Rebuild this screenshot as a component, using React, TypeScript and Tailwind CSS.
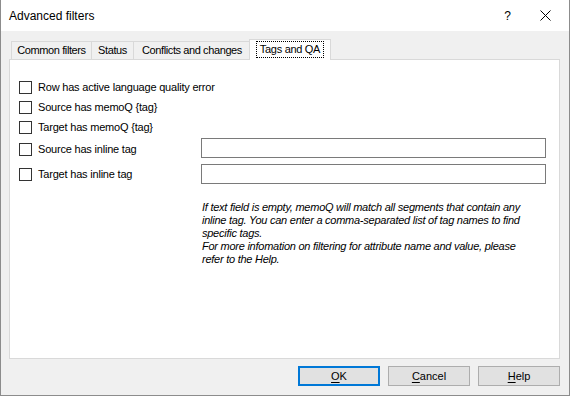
import React from "react";

const font = { fontFamily: '"Liberation Sans", Arial, sans-serif' };

function Checkbox() {
  return <div className="w-[13px] h-[13px] border border-[#333333] bg-white shrink-0" />;
}

function CheckRow({ label }: { label: string }) {
  return (
    <div className="flex items-center h-[13px]">
      <Checkbox />
      <span className="ml-[6px] text-[11px] leading-[13px] tracking-[-0.2px] text-black whitespace-nowrap">{label}</span>
    </div>
  );
}

function InputRow({ label, cbOffset }: { label: string; cbOffset: string }) {
  return (
    <div className="flex items-start h-[20px]">
      <div className={`flex items-center w-[182px] ${cbOffset}`}>
        <Checkbox />
        <span className="ml-[6px] text-[11px] leading-[13px] tracking-[-0.2px] text-black whitespace-nowrap">{label}</span>
      </div>
      <div className="w-[345px] h-[20px] border border-[#7a7a7a] bg-white" />
    </div>
  );
}

function Tab({ label, w, extra }: { label: string; w: string; extra?: string }) {
  return (
    <div
      className={`h-[18px] ${w} border-t border-l border-[#d9d9d9] bg-[#f0f0f0] flex items-center justify-center text-[11px] tracking-[-0.4px] text-black whitespace-nowrap ${extra ?? ""}`}
    >
      {label}
    </div>
  );
}

function Btn({ children, primary }: { children: React.ReactNode; primary?: boolean }) {
  return (
    <div
      className={`w-[82px] h-[20px] flex items-center justify-center bg-[#e1e1e1] text-[11px] text-black ${
        primary ? "border-2 border-[#0078d7]" : "border border-[#adadad]"
      }`}
    >
      {children}
    </div>
  );
}

export default function App() {
  return (
    <div style={font} className="w-[570px] h-[396px] border-x border-b border-[#8c8c8c] bg-[#f0f0f0] flex flex-col overflow-hidden">
      {/* Title bar */}
      <div className="h-[31px] bg-white flex items-center pl-[8px] shrink-0">
        <span className="text-[12px] text-black">Advanced filters</span>
        <span className="ml-auto text-[12px] text-black">?</span>
        <svg className="ml-[29px] mr-[18px]" width="11" height="11" viewBox="0 0 11 11">
          <path d="M0.5 0.5 L10.5 10.5 M10.5 0.5 L0.5 10.5" stroke="#000" strokeWidth="1" fill="none" />
        </svg>
      </div>

      {/* Body */}
      <div className="flex flex-col pl-[8px] pr-[9px] flex-1">
        {/* Tabs */}
        <div className="flex items-end h-[20px] mt-[8px] pl-[2px]">
          <Tab label="Common filters" w="w-[80px]" />
          <Tab label="Status" w="w-[42px]" />
          <Tab label="Conflicts and changes" w="w-[118px]" extra="border-r" />
          <div className="relative z-10 -ml-[2px] -mb-px h-[21px] w-[82px] bg-white border-t border-l border-r border-[#d9d9d9] flex items-start justify-center pt-[2px]">
            <span className="outline-1 outline-dotted outline-black px-[3px] text-[11px] leading-[15px] tracking-[-0.3px] text-black whitespace-nowrap">
              Tags and QA
            </span>
          </div>
        </div>

        {/* Panel */}
        <div className="h-[300px] bg-white border border-[#d9d9d9] pl-[9px] pt-[21px] flex flex-col">
          <CheckRow label="Row has active language quality error" />
          <div className="h-[7px]" />
          <CheckRow label="Source has memoQ {tag}" />
          <div className="h-[7px]" />
          <CheckRow label="Target has memoQ {tag}" />
          <div className="h-[4px]" />
          <InputRow label="Source has inline tag" cbOffset="mt-[5px]" />
          <div className="h-[6px]" />
          <InputRow label="Target has inline tag" cbOffset="mt-[4px]" />
          <div className="ml-[183px] mt-[17px] text-[11px] leading-[13px] italic tracking-[-0.25px] text-black whitespace-nowrap">
            <div>If text field is empty, memoQ will match all segments that contain any</div>
            <div>inline tag. You can enter a comma-separated list of tag names to find</div>
            <div>specific tags.</div>
            <div>For more infomation on filtering for attribute name and value, please</div>
            <div>refer to the Help.</div>
          </div>
        </div>

        {/* Buttons */}
        <div className="flex justify-end gap-[8px] mt-[7px]">
          <Btn primary>
            <span className="underline underline-offset-2">O</span>K
          </Btn>
          <Btn>
            <span className="underline underline-offset-2">C</span>ancel
          </Btn>
          <Btn>
            <span className="underline underline-offset-2">H</span>elp
          </Btn>
        </div>
      </div>
    </div>
  );
}
